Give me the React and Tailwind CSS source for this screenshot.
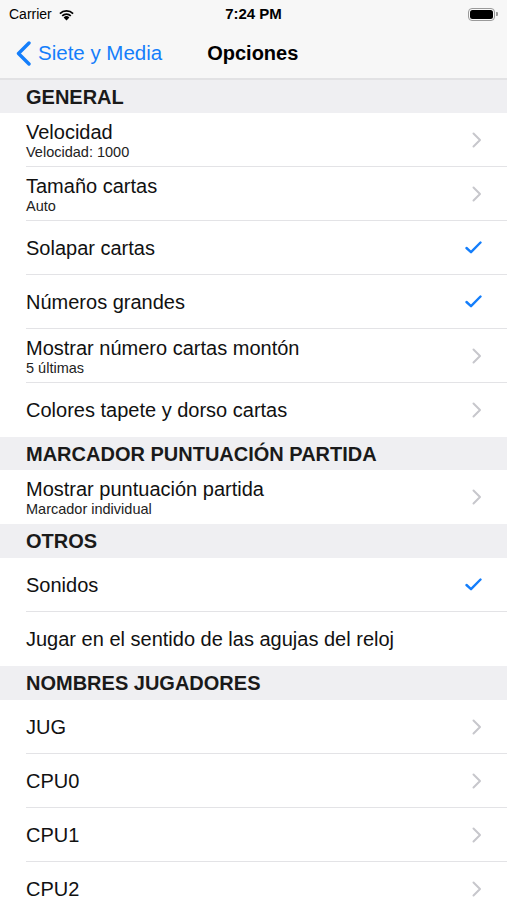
import React from 'react';

const sections = [
  {
    title: 'GENERAL',
    h: 'h-[33px]',
    rows: [
      { label: 'Velocidad', sub: 'Velocidad: 1000', acc: 'chevron' },
      { label: 'Tamaño cartas', sub: 'Auto', acc: 'chevron' },
      { label: 'Solapar cartas', acc: 'check' },
      { label: 'Números grandes', acc: 'check' },
      { label: 'Mostrar número cartas montón', sub: '5 últimas', acc: 'chevron' },
      { label: 'Colores tapete y dorso cartas', acc: 'chevron' },
    ],
  },
  {
    title: 'MARCADOR PUNTUACIÓN PARTIDA',
    h: 'h-[33px]',
    rows: [{ label: 'Mostrar puntuación partida', sub: 'Marcador individual', acc: 'chevron' }],
  },
  {
    title: 'OTROS',
    h: 'h-[34px]',
    rows: [
      { label: 'Sonidos', acc: 'check' },
      { label: 'Jugar en el sentido de las agujas del reloj' },
    ],
  },
  {
    title: 'NOMBRES JUGADORES',
    h: 'h-[34px]',
    rows: [
      { label: 'JUG', acc: 'chevron' },
      { label: 'CPU0', acc: 'chevron' },
      { label: 'CPU1', acc: 'chevron' },
      { label: 'CPU2', acc: 'chevron' },
    ],
  },
];

function Chevron() {
  return (
    <svg width="12" height="16" viewBox="0 0 12 16" fill="none">
      <path d="M2.5 1.5 L9 8 L2.5 14.5" stroke="#c7c7cc" strokeWidth="2" strokeLinecap="round" strokeLinejoin="round" />
    </svg>
  );
}

function Check() {
  return (
    <svg width="17" height="13" viewBox="0 0 17 13" fill="none">
      <path d="M1.5 7 L6 11.2 L15.5 1.5" stroke="#147efb" strokeWidth="2.4" strokeLinecap="round" strokeLinejoin="round" />
    </svg>
  );
}

function Row({ row, last }) {
  return (
    <div className="flex h-[54px] flex-col bg-white pl-[26px]">
      <div className="flex flex-1 items-center pr-[24px]">
        <div className="flex flex-1 flex-col justify-center">
          <div className="text-[20px] leading-[24px] text-[#111]">{row.label}</div>
          {row.sub && <div className="text-[14.5px] leading-[16px] text-[#222]">{row.sub}</div>}
        </div>
        {row.acc === 'chevron' && <Chevron />}
        {row.acc === 'check' && (
          <div className="pr-[1px]">
            <Check />
          </div>
        )}
      </div>
      <div className={last ? 'h-px' : 'h-px bg-[#e3e3e6]'} />
    </div>
  );
}

export default function App() {
  return (
    <div className="h-[900px] w-[507px] overflow-hidden bg-white font-['Liberation_Sans',Arial,sans-serif]">
      {/* status bar */}
      <div className="flex h-[28px] items-center bg-[#f7f7f7] px-[9px] text-[14px] text-black">
        <div className="flex flex-1 items-center gap-[6px]">
          <span>Carrier</span>
          <svg width="17" height="13" viewBox="0 0 17 13">
            <path d="M8.5 12.5 L5.6 9.4 A4.2 4.2 0 0 1 11.4 9.4 Z" fill="#000" />
            <path d="M3.6 7.3 A7 7 0 0 1 13.4 7.3 L12.2 8.5 A5.3 5.3 0 0 0 4.8 8.5 Z" fill="#000" />
            <path d="M1.3 5 A10.2 10.2 0 0 1 15.7 5 L14.5 6.2 A8.5 8.5 0 0 0 2.5 6.2 Z" fill="#000" />
          </svg>
        </div>
        <div className="text-[15px] font-bold">7:24 PM</div>
        <div className="flex flex-1 justify-end">
          <div className="flex items-center">
            <div className="flex h-[13px] w-[27px] items-center rounded-[4px] border border-[#9a9a9a] p-[1px]">
              <div className="h-full w-full rounded-[2.5px] bg-black" />
            </div>
            <div className="ml-[1px] h-[4px] w-[2px] rounded-r-[1px] bg-[#9a9a9a]" />
          </div>
        </div>
      </div>
      {/* nav bar */}
      <div className="flex h-[52px] items-center border-b-2 border-[#e2e2e4] bg-[#f7f7f7]">
        <div className="flex items-center pl-[15px] text-[#147efb]">
          <svg width="18" height="25" viewBox="0 0 18 25" fill="none">
            <path d="M14 2 L3.5 12.5 L14 23" stroke="#147efb" strokeWidth="3.4" strokeLinecap="round" strokeLinejoin="round" />
          </svg>
          <span className="ml-[5px] text-[20.5px]">Siete y Media</span>
        </div>
        <div className="ml-[45px] text-[20px] font-bold text-black">Opciones</div>
      </div>
      {sections.map((s) => (
        <div key={s.title}>
          <div className={`flex ${s.h} items-center bg-[#efeff2] pl-[26px] text-[20px] font-bold text-[#1a1a1a]`}>
            {s.title}
          </div>
          {s.rows.map((r, i) => (
            <Row key={r.label} row={r} last={i === s.rows.length - 1} />
          ))}
        </div>
      ))}
    </div>
  );
}
